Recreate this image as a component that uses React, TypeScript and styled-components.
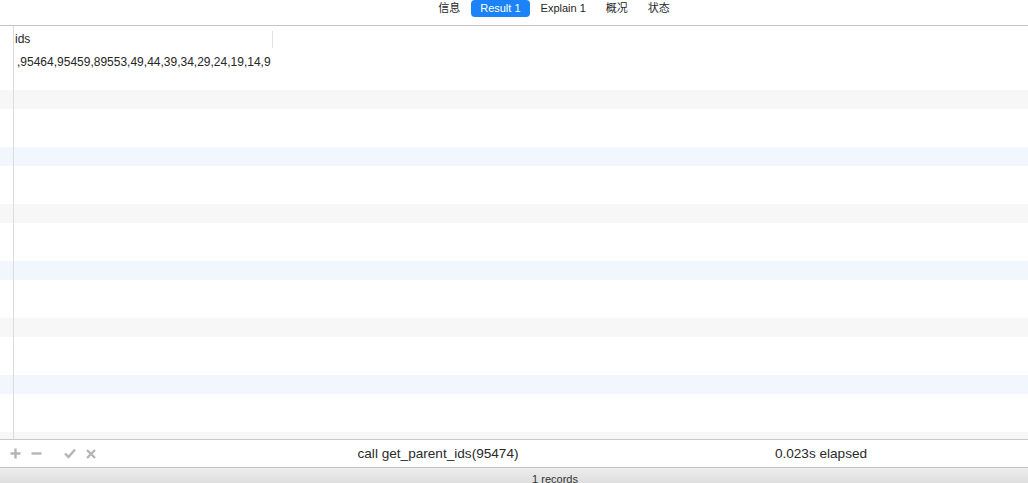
import React from "react";
import styled, { createGlobalStyle } from "styled-components";

const GlobalStyle = createGlobalStyle`
  html, body {
    margin: 0;
    padding: 0;
    background: #ffffff;
    font-family: "Liberation Sans", Arial, "Noto Sans CJK SC", sans-serif;
    color: #262626;
  }
  #root {
    height: 483px;
    overflow: hidden;
  }
`;

const Window = styled.div`
  width: 1028px;
  height: 483px;
  display: flex;
  flex-direction: column;
  overflow: hidden;
`;

const TabBar = styled.div`
  height: 26px;
  flex: none;
  display: flex;
  justify-content: center;
  align-items: flex-start;
  padding-left: 80px;
  border-bottom: 1px solid #c4c4c4;
  box-sizing: border-box;
`;

const Tab = styled.div<{ $active?: boolean }>`
  height: 17px;
  line-height: 17px;
  padding: 0 ${({ $active }) => ($active ? 9 : 10)}px;
  margin: 0 ${({ $active }) => ($active ? 1 : 0)}px;
  font-size: 11px;
  border-radius: 4px;
  color: ${({ $active }) => ($active ? "#ffffff" : "#262626")};
  background: ${({ $active }) => ($active ? "#1b82f7" : "transparent")};
  font-weight: ${({ $active }) => ($active ? 500 : 400)};
`;

const Grid = styled.div`
  flex: 1;
  overflow: hidden;
`;

const HeaderRow = styled.div`
  height: 26px;
  display: flex;
  align-items: center;
`;

const Gutter = styled.div`
  width: 13px;
  height: 100%;
  flex: none;
  border-right: 1px solid #dcdcdc;
`;

const HeaderCell = styled.div`
  width: 257px;
  height: 17px;
  line-height: 17px;
  padding-left: 1px;
  font-size: 12px;
  color: #262626;
  border-right: 1px solid #e2e2e2;
`;

const Row = styled.div<{ $tint: "none" | "gray" | "blue" }>`
  height: 19px;
  display: flex;
  align-items: center;
  background: ${({ $tint }) =>
    $tint === "gray" ? "#f7f7f7" : $tint === "blue" ? "#f2f7fd" : "#ffffff"};
`;

const Cell = styled.div`
  width: 258px;
  padding-left: 3px;
  font-size: 12px;
  color: #262626;
  white-space: nowrap;
  overflow: hidden;
`;

const Toolbar = styled.div`
  height: 28px;
  flex: none;
  display: grid;
  grid-template-columns: 110px 656px 110px 1fr;
  align-items: center;
  border-top: 1px solid #c8c8c8;
  box-sizing: border-box;
  background: #ffffff;
`;

const Buttons = styled.div`
  display: flex;
  align-items: center;
  padding-left: 10px;
  gap: 10px;
`;

const IconButton = styled.span<{ $gap?: number }>`
  display: flex;
  margin-left: ${({ $gap }) => $gap ?? 0}px;
`;

const ToolbarText = styled.div`
  text-align: center;
  font-size: 13.6px;
  color: #2a2a2a;
  white-space: nowrap;
`;

const StatusBar = styled.div`
  height: 15px;
  flex: none;
  border-top: 1px solid #c6c6c6;
  background: linear-gradient(#ededed, #dedede);
  display: flex;
  justify-content: center;
  padding-left: 82px;
  font-size: 11px;
  color: #333;
  line-height: 22px;
`;

const iconColor = "#b5b5b5";

const PlusIcon = () => (
  <svg width="11" height="11" viewBox="0 0 11 11">
    <path d="M5.5 0.5v10M0.5 5.5h10" stroke={iconColor} strokeWidth="2.4" />
  </svg>
);

const MinusIcon = () => (
  <svg width="11" height="11" viewBox="0 0 11 11">
    <path d="M0.5 5.5h10" stroke={iconColor} strokeWidth="2.4" />
  </svg>
);

const CheckIcon = () => (
  <svg width="12" height="11" viewBox="0 0 12 11">
    <path d="M1 5.5l3.5 3.5L11 1.5" stroke={iconColor} strokeWidth="2.4" fill="none" />
  </svg>
);

const CrossIcon = () => (
  <svg width="10" height="10" viewBox="0 0 10 10">
    <path d="M1 1l8 8M9 1l-8 8" stroke={iconColor} strokeWidth="2.4" />
  </svg>
);

const tabs = ["信息", "Result 1", "Explain 1", "概况", "状态"];

const rowCount = 21;

export default function App() {
  const rows = Array.from({ length: rowCount }, (_, i) => {
    let tint: "none" | "gray" | "blue" = "none";
    if (i % 3 === 2) tint = Math.floor(i / 3) % 2 === 0 ? "gray" : "blue";
    return tint;
  });

  return (
    <Window>
      <GlobalStyle />
      <TabBar>
        {tabs.map((t) => (
          <Tab key={t} $active={t === "Result 1"}>
            {t}
          </Tab>
        ))}
      </TabBar>
      <Grid>
        <HeaderRow>
          <Gutter />
          <HeaderCell>ids</HeaderCell>
        </HeaderRow>
        {rows.map((tint, i) => (
          <Row key={i} $tint={tint}>
            <Gutter />
            {i === 0 && <Cell>,95464,95459,89553,49,44,39,34,29,24,19,14,9</Cell>}
          </Row>
        ))}
      </Grid>
      <Toolbar>
        <Buttons>
          <IconButton>
            <PlusIcon />
          </IconButton>
          <IconButton>
            <MinusIcon />
          </IconButton>
          <IconButton $gap={12}>
            <CheckIcon />
          </IconButton>
          <IconButton>
            <CrossIcon />
          </IconButton>
        </Buttons>
        <ToolbarText>call get_parent_ids(95474)</ToolbarText>
        <ToolbarText>0.023s elapsed</ToolbarText>
        <div />
      </Toolbar>
      <StatusBar>1 records</StatusBar>
    </Window>
  );
}
